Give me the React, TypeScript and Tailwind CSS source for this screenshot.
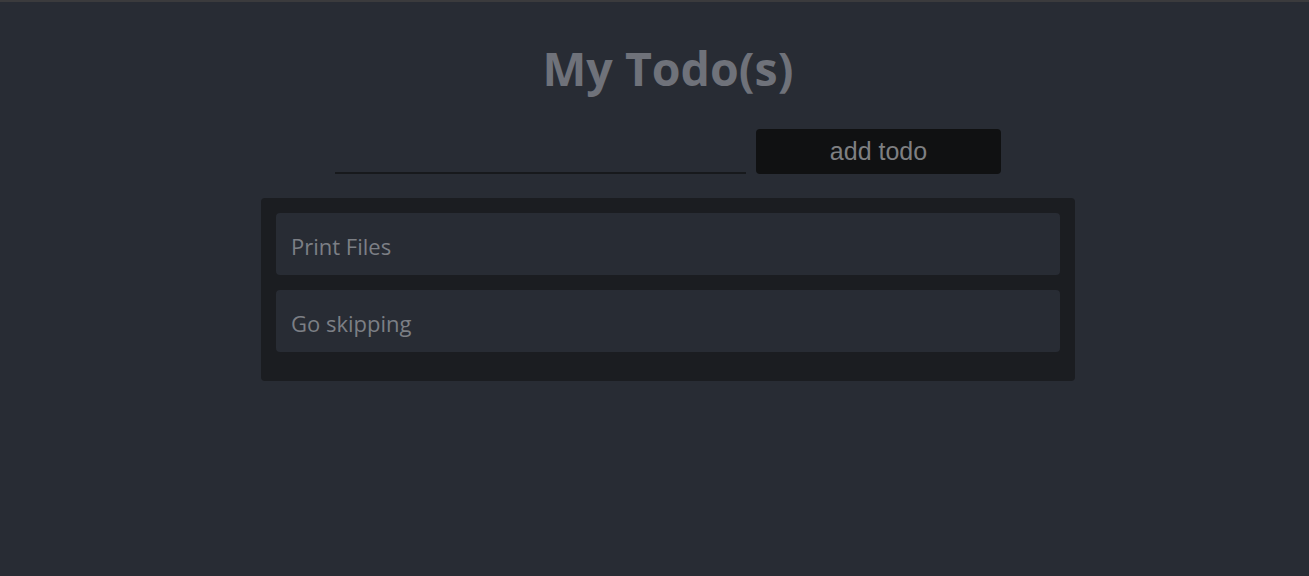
import { useState } from 'react';

export default function App() {
  const [todos] = useState<string[]>(['Print Files', 'Go skipping']);
  const [text, setText] = useState('');

  return (
    <div className="min-h-[576px] bg-[#282c34] border-t-2 border-[#3b3b3d] font-['Open_Sans',sans-serif]">
      <div className="flex flex-col items-center pl-[27px]">
        <h1 className="mt-[34px] text-[46.5px] leading-[64px] font-bold text-[#6f727a]">My Todo(s)</h1>

        <div className="mt-[29px] flex items-end gap-[10px]">
          <input
            value={text}
            onChange={(e) => setText(e.target.value)}
            className="w-[411px] h-[30px] bg-transparent border-b-2 border-[#17191c] outline-none text-[#8a8d93] text-lg"
          />
          <button className="w-[245px] h-[45px] rounded-[4px] bg-[#101112] text-[#7e7f81] text-[25px] font-['Liberation_Sans',Arial,sans-serif]">
            add todo
          </button>
        </div>

        <div className="mt-[24px] w-[814px] rounded-[4px] bg-[#1b1d21] p-[15px] flex flex-col gap-[15px] pb-[29px]">
          {todos.map((t) => (
            <div key={t} className="h-[62px] rounded-[4px] bg-[#282c34] px-[15px] pt-[4px] flex items-center text-[22px] text-[#7c7f85]">
              {t}
            </div>
          ))}
        </div>
      </div>
    </div>
  );
}
